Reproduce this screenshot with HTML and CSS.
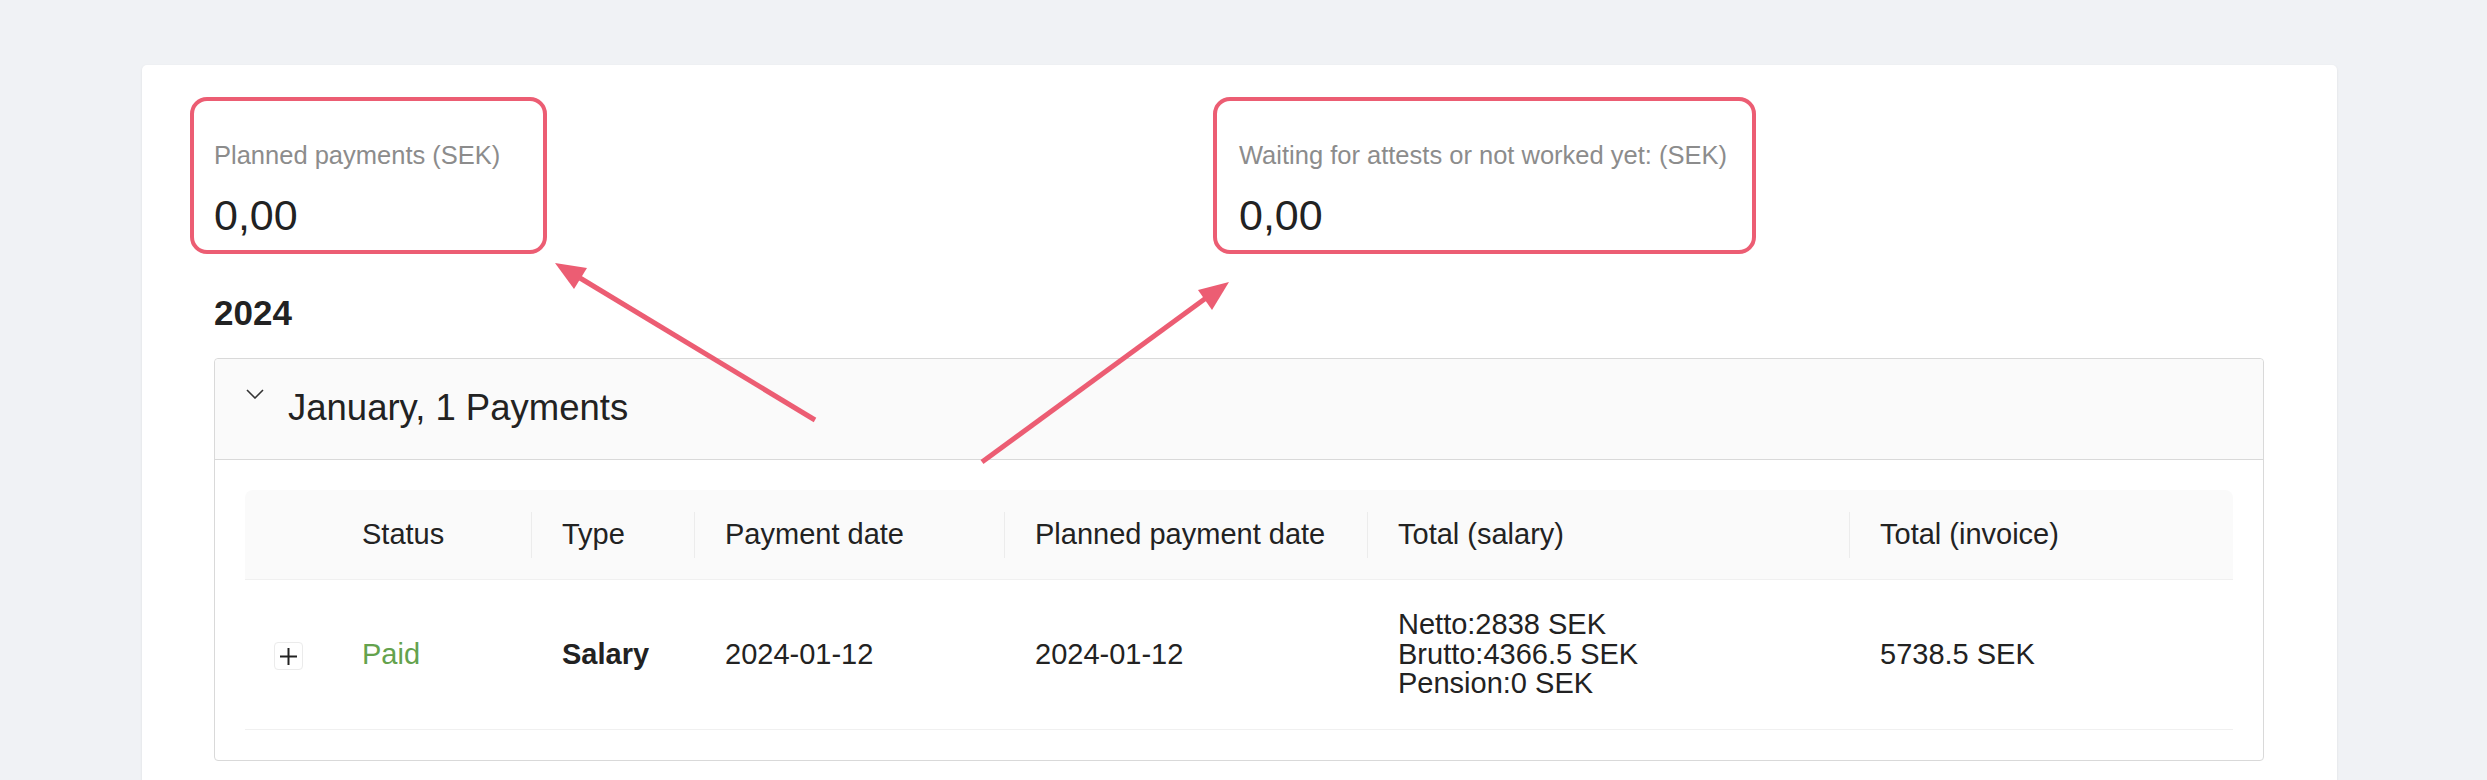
FILE: index.html
```html
<!DOCTYPE html>
<html lang="en">
<head>
    <meta charset="UTF-8">
    <meta name="viewport" content="width=device-width, initial-scale=1.0">
    <title>Payments</title>
    <link rel="stylesheet" href="styles.css">
</head>
<body>
    <div class="card">
        <div class="stats">
            <div class="stat-col">
                <div class="stat stat-planned">
                    <div class="stat-label">Planned payments (SEK)</div>
                    <div class="stat-value">0,00</div>
                </div>
            </div>
            <div class="stat-col">
                <div class="stat stat-waiting">
                    <div class="stat-label">Waiting for attests or not worked yet: (SEK)</div>
                    <div class="stat-value">0,00</div>
                </div>
            </div>
        </div>

        <h2 class="year">2024</h2>

        <div class="panel">
            <div class="panel-header">
                <svg class="chevron" width="18" height="10" viewBox="0 0 18 10">
                    <polyline points="1,1 9,9 17,1" fill="none" stroke="#333" stroke-width="1.6"/>
                </svg>
                <span class="panel-title">January, 1 Payments</span>
            </div>
            <div class="panel-body">
                <table class="payments">
                    <colgroup>
                        <col class="col-expand">
                        <col class="col-status">
                        <col class="col-type">
                        <col class="col-date">
                        <col class="col-planned">
                        <col class="col-salary">
                        <col>
                    </colgroup>
                    <thead>
                        <tr>
                            <th class="th-expand"></th>
                            <th class="sep">Status</th>
                            <th class="sep">Type</th>
                            <th class="sep">Payment date</th>
                            <th class="sep">Planned payment date</th>
                            <th class="sep">Total (salary)</th>
                            <th>Total (invoice)</th>
                        </tr>
                    </thead>
                    <tbody>
                        <tr>
                            <td class="td-expand">
                                <button class="expand-btn">
                                    <svg width="17" height="17" viewBox="0 0 17 17">
                                        <line x1="0" y1="8.5" x2="17" y2="8.5" stroke="#222" stroke-width="2"/>
                                        <line x1="8.5" y1="0" x2="8.5" y2="17" stroke="#222" stroke-width="2"/>
                                    </svg>
                                </button>
                            </td>
                            <td class="status-paid">Paid</td>
                            <td class="type">Salary</td>
                            <td>2024-01-12</td>
                            <td>2024-01-12</td>
                            <td>
                                <div class="salary-line">Netto:2838 SEK</div>
                                <div class="salary-line">Brutto:4366.5 SEK</div>
                                <div class="salary-line">Pension:0 SEK</div>
                            </td>
                            <td>5738.5 SEK</td>
                        </tr>
                    </tbody>
                </table>
            </div>
        </div>

        <!-- annotation arrows -->
        <svg class="arrows" width="1200" height="420" viewBox="0 0 1200 420">
            <line x1="673" y1="355" x2="438" y2="213" stroke="#ec5d73" stroke-width="5"/>
            <polygon points="413,198 445,203 432,224" fill="#ec5d73"/>
            <line x1="840" y1="397" x2="1064" y2="233" stroke="#ec5d73" stroke-width="5"/>
            <polygon points="1087,217 1070,245 1056,225" fill="#ec5d73"/>
        </svg>
    </div>
</body>
</html>
```

FILE: styles.css
```css
* {
    margin: 0;
    padding: 0;
    box-sizing: border-box;
}

body {
    background: #f0f2f5;
    font-family: "Liberation Sans", Arial, sans-serif;
    color: #222;
    overflow: hidden;
}

.card {
    position: relative;
    background: #fff;
    width: 2195px;
    margin: 65px 0 0 142px;
    padding: 32px 73px 60px 72px;
    border-radius: 5px;
    box-shadow: 0 1px 3px rgba(0, 0, 0, 0.08);
}

.stats {
    display: grid;
    grid-template-columns: 1fr 1fr;
}

.stat {
    margin-left: -24px;
    border: 4px solid #ec5d73;
    border-radius: 17px;
    padding: 35px 20px 9px 20px;
}

.stat-planned {
    width: 357px;
}

.stat-waiting {
    width: 543px;
    margin-left: -26px;
    padding-left: 22px;
}

.stat-label {
    font-size: 25.5px;
    line-height: 38px;
    color: #8c8c8c;
}

.stat-value {
    margin-top: 15px;
    font-size: 43px;
    line-height: 52px;
    color: #222;
}

.year {
    margin-top: 38px;
    font-size: 35px;
    line-height: 42px;
    font-weight: 700;
    color: #222;
}

.panel {
    margin-top: 24px;
    border: 1px solid #d9d9d9;
    border-radius: 4px;
}

.panel-header {
    display: flex;
    align-items: flex-start;
    gap: 24px;
    background: #fafafa;
    border-bottom: 1px solid #d9d9d9;
    padding: 21px 30px 24px 31px;
    border-radius: 4px 4px 0 0;
}

.chevron {
    margin-top: 9px;
    flex-shrink: 0;
}

.panel-title {
    font-size: 36.5px;
    line-height: 55px;
    color: #222;
}

.panel-body {
    padding: 30px;
}

.payments {
    width: 100%;
    border-collapse: collapse;
    table-layout: fixed;
    font-size: 29px;
    color: #222;
}

.col-expand { width: 87px; }
.col-status { width: 200px; }
.col-type { width: 163px; }
.col-date { width: 310px; }
.col-planned { width: 363px; }
.col-salary { width: 482px; }

.payments th {
    position: relative;
    background: #fafafa;
    font-weight: 400;
    text-align: left;
    padding: 23px 30px;
    line-height: 43px;
    border-bottom: 1px solid #f0f0f0;
}

.payments thead th:first-child {
    border-top-left-radius: 8px;
}

.payments thead th:last-child {
    border-top-right-radius: 8px;
}

.payments th.sep::before {
    content: '';
    position: absolute;
    right: 0;
    top: 50%;
    width: 1px;
    height: 46px;
    margin-top: -23px;
    background: #ececec;
}

.payments td {
    padding: 30px;
    line-height: 43px;
    vertical-align: middle;
    border-bottom: 1px solid #f0f0f0;
}

.payments td.td-expand {
    padding: 0;
    text-align: center;
}

.expand-btn {
    width: 29px;
    height: 28px;
    background: #fff;
    border: 1px solid #ebebeb;
    border-radius: 4px;
    display: inline-flex;
    align-items: center;
    justify-content: center;
    vertical-align: middle;
}

.status-paid {
    color: #64a24d;
}

.type {
    font-weight: 700;
}

.salary-line {
    line-height: 29.5px;
}

.arrows {
    position: absolute;
    left: 0;
    top: 0;
    pointer-events: none;
}
```
